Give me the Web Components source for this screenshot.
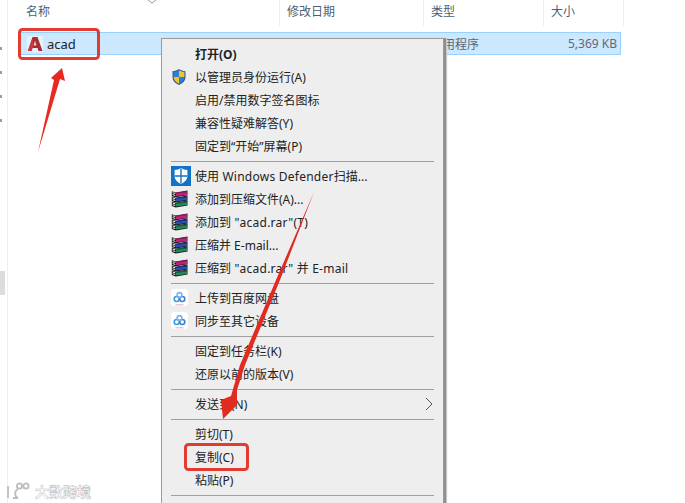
<!DOCTYPE html>
<html lang="zh"><head><meta charset="utf-8"><title>acad</title>
<style>
html,body{margin:0;padding:0;background:#fff}
body{font:12px "Noto Sans","Noto Sans CJK SC",sans-serif;}
</style></head><body>
<x-explorer>
  <x-nav-strip slot="nav"></x-nav-strip>
  <x-file-list slot="list"></x-file-list>
  <x-context-menu slot="menu">
    <x-menu-item bold>打开(O)</x-menu-item>
    <x-menu-item icon="uac">以管理员身份运行(A)</x-menu-item>
    <x-menu-item>启用/禁用数字签名图标</x-menu-item>
    <x-menu-item>兼容性疑难解答(Y)</x-menu-item>
    <x-menu-item>固定到“开始”屏幕(P)</x-menu-item>
    <x-menu-sep></x-menu-sep>
    <x-menu-item icon="defender">使用<x-l> Windows Defender</x-l>扫描...</x-menu-item>
    <x-menu-item icon="rar">添加到压缩文件(A)...</x-menu-item>
    <x-menu-item icon="rar">添加到<x-l> "acad.rar"(T)</x-l></x-menu-item>
    <x-menu-item icon="rar">压缩并 E-mail...</x-menu-item>
    <x-menu-item icon="rar">压缩到<x-l> "acad.rar" </x-l>并<x-l> E-mail</x-l></x-menu-item>
    <x-menu-sep></x-menu-sep>
    <x-menu-item icon="baidu">上传到百度网盘</x-menu-item>
    <x-menu-item icon="baidu">同步至其它设备</x-menu-item>
    <x-menu-sep></x-menu-sep>
    <x-menu-item>固定到任务栏(K)</x-menu-item>
    <x-menu-item>还原以前的版本(V)</x-menu-item>
    <x-menu-sep></x-menu-sep>
    <x-menu-item arrow>发送到(N)</x-menu-item>
    <x-menu-sep></x-menu-sep>
    <x-menu-item>剪切(T)</x-menu-item>
    <x-menu-item>复制(C)</x-menu-item>
    <x-menu-item>粘贴(P)</x-menu-item>
    <x-menu-sep></x-menu-sep>
  </x-context-menu>
  <x-annotations slot="notes"></x-annotations>
  <x-watermark slot="mark"></x-watermark>
</x-explorer>
<script>
const FONT='"Noto Sans","Noto Sans CJK SC",sans-serif';
const book=(y,c,d)=>`<path d="M.8 ${y}l4 1.300L16.500 ${y-.8}v4.800L4.800 ${y+6}l-4-1.300z" fill="#161616"/><path d="M5 ${y+1.500}l11-1.400v3.600L5 ${y+5.100}z" fill="${c}"/><path d="M5 ${y+1.500}l11-1.400v1L5 ${y+2.500}z" fill="${d}"/><path d="M1.600 ${y+1}l2.700.9v1l-2.700-.9zM1.600 ${y+2.800}l2.700.9v1l-2.700-.9z" fill="#f4f4f4"/>`;
const ICONS={
 uac:`<svg width="16" height="18" viewBox="0 0 16 18"><path d="M8 1C6 2.400 4 3 1.500 3.200V9c0 3.600 2.600 6.200 6.500 8 3.900-1.800 6.500-4.400 6.500-8V3.200C12 3 10 2.400 8 1z" fill="#2b5f9e"/><path d="M8 2.200V9H2.600V3.900C4.600 3.700 6.400 3.200 8 2.200z" fill="#2f7fd0"/><path d="M8 2.200c1.600 1 3.400 1.500 5.400 1.700V9H8z" fill="#f0c230"/><path d="M2.600 9H8v6.800C4.800 14.300 2.800 12 2.600 9z" fill="#f0c230"/><path d="M8 9h5.400C13.200 12 11.200 14.300 8 15.800z" fill="#2f7fd0"/></svg>`,
 defender:`<svg width="20" height="20" viewBox="0 0 20 20"><rect width="20" height="20" fill="#1173c7"/><path d="M10 2c-1.900 1.300-4 1.900-6.400 2.100v5.900c0 3.500 2.600 6.200 6.400 8 3.800-1.800 6.400-4.500 6.400-8V4.100C14 3.900 11.900 3.300 10 2z" fill="#fff"/><path d="M9.300 2.600h1.400v6.700h5.700v1.400h-5.700V17.500H9.300v-6.800H3.600V9.300h5.700z" fill="#1173c7"/></svg>`,
 rar:`<svg width="18" height="18" viewBox="0 0 18 18">${book(1.200,'#c41f7e','#7a1f4e')}${book(6.400,'#2b4fb0','#1d2f70')}${book(11.400,'#24895a','#145a3a')}</svg>`,
 baidu:`<svg width="17" height="17" viewBox="0 0 17 17"><rect width="17" height="17" rx="3.500" fill="#fff"/><g fill="none" stroke-width="1.600"><circle cx="5.700" cy="10" r="2.500" stroke="#3d9be0"/><circle cx="11.300" cy="10" r="2.500" stroke="#3d82d0"/><circle cx="8.500" cy="6" r="2.400" stroke="#7fb4e4"/></g><path d="M4.500 15.800h8" stroke="#d49ab0" stroke-width=".8"/></svg>`
};
function def(name,html){
  customElements.define(name,class extends HTMLElement{
    constructor(){super();this.attachShadow({mode:'open'}).innerHTML=html;}
  });
}
def('x-explorer',`<style>
:host{display:flex;position:relative;width:685px;height:503px;overflow:hidden;background:#fff;font:12px ${FONT}}
.menu{position:absolute;left:161px;top:38px}
.notes{position:absolute;left:0;top:0}
.mark{position:absolute;left:6px;top:481px}
</style><slot name="nav"></slot><slot name="list"></slot>
<div class="menu"><slot name="menu"></slot></div>
<div class="notes"><slot name="notes"></slot></div>
<div class="mark"><slot name="mark"></slot></div>`);
def('x-nav-strip',`<style>
:host{display:flex;flex-direction:column;width:7px;border-right:1px solid #efefef;flex:none;padding-top:47px;height:456px}
i{display:block;width:2px;height:3px;background:#9a9a9a;margin-bottom:21px}
b{display:block;width:5px;height:24px;background:#dcdcdc;margin-top:128px}
</style><i></i><i></i><i></i><i></i><b></b>`);
def('x-file-list',`<style>
:host{display:block;flex:none;width:677px;color:#444}
.head{display:grid;grid-template-columns:272px 144px 120px 80px;height:26px;position:relative;color:#4d5f73}
.head div{padding:0 0 4px 7px;border-right:1px solid #efeff2;display:flex;align-items:center;box-sizing:border-box}
.head div.n{padding-left:18px}
.caret{position:absolute;left:139px;top:0}
.row{display:grid;grid-template-columns:412px 1fr auto;margin:6px 0 0 10px;width:601px;height:19px;padding:1px 0;background:#cce8ff;border:1px solid #99d1ff;align-items:center}
.row>div{white-space:nowrap}
.name{display:flex;align-items:center;gap:4px;padding-left:8px;color:#222;font-size:13px}
.type{color:#5c6670}
.size{color:#667;text-align:right;padding-right:3px}
</style>
<div class="head"><div class="n">名称</div><div>修改日期</div><div>类型</div><div>大小</div><svg class="caret" width="10" height="4" viewBox="0 0 10 4"><path d="M1 0l4 3 4-3" fill="none" stroke="#999"/></svg></div>
<div class="row">
<div class="name"><svg width="16" height="16" viewBox="0 0 16 16"><rect width="16" height="16" fill="#e4f1fb"/><path d="M5.500 1h5l5 14h-4l-1-3H5.500l-1 3H.8z" fill="#a92c33"/><path d="M8 4.500l1.500 5h-3z" fill="#e9cfcf"/><path d="M.8 15 6 3v6.500l.5 0-1 2.500-1 3z" fill="#d5353b"/></svg>acad</div>
<div class="type">应用程序</div><div class="size">5,369 KB</div></div>`);
def('x-context-menu',`<style>
:host{display:block;width:283px;height:480px;background:#eee;border:1px solid #9a9a9a;border-bottom:0;box-sizing:border-box;padding:3px 9px 0 9px;box-shadow:2px 0 0 #8f8f8f,3px 0 1px #c8c8c8;color:#222}
</style><slot></slot>`);
def('x-l',`<style>:host{letter-spacing:.25px}</style><slot></slot>`);
customElements.define('x-menu-item',class extends HTMLElement{
  constructor(){super();
    const icon=this.getAttribute('icon');
    const r=this.attachShadow({mode:'open'});
    r.innerHTML=`<style>
    :host{display:flex;align-items:center;height:23px;position:relative;white-space:pre;font-size:12px}
    :host([bold]){font-weight:700}
    .ic{width:24px;flex:none;display:flex;align-items:center;height:23px}
    .ic svg{display:block}
    .t{display:block}
    .arrow{position:absolute;right:1px;top:5px}
    </style><span class="ic">${icon?ICONS[icon]:''}</span><span class="t"><slot></slot></span>${this.hasAttribute('arrow')?'<svg class="arrow" width="8" height="14" viewBox="0 0 8 14"><path d="M1 1l6 6-6 6" fill="none" stroke="#555"/></svg>':''}`;
  }
});
def('x-menu-sep',`<style>:host{display:block;height:1px;background:#a0a0a0;margin:4px 0 2px}</style>`);
def('x-annotations',`<style>:host{display:block;width:685px;height:503px;pointer-events:none}svg{display:block}</style>
<svg width="685" height="503" viewBox="0 0 685 503">
<rect x="19.500" y="29.500" width="79" height="29" rx="3" fill="none" stroke="#e23b30" stroke-width="3"/>
<rect x="185.500" y="444.500" width="62" height="25" rx="3" fill="none" stroke="#e23b30" stroke-width="3"/>
<path d="M38 152 54 80 51 78 62 68 65 81 60 79z" fill="#e8291f"/>
<path d="M314 192 280 280 245 365 237 390 237 405 223 419 221 400 231 396 240 365 276 280z" fill="#e02b20"/>
</svg>`);
def('x-watermark',`<style>
:host{display:flex;align-items:center;gap:3px;font:700 14px "Noto Sans CJK SC",sans-serif;color:#fff;-webkit-text-stroke:.6px #c4c4c4}
</style><svg width="26" height="18" viewBox="0 0 26 18"><g fill="none" stroke="#bdbdbd" stroke-width="1.800"><path d="M2 4v12"/><path d="M12 7a5 5 0 0 0 0 9H7" /><circle cx="13.500" cy="4" r="2.600"/><circle cx="20" cy="4" r="2.600"/></g></svg><span>大数跨境</span>`);
</script></body></html>
